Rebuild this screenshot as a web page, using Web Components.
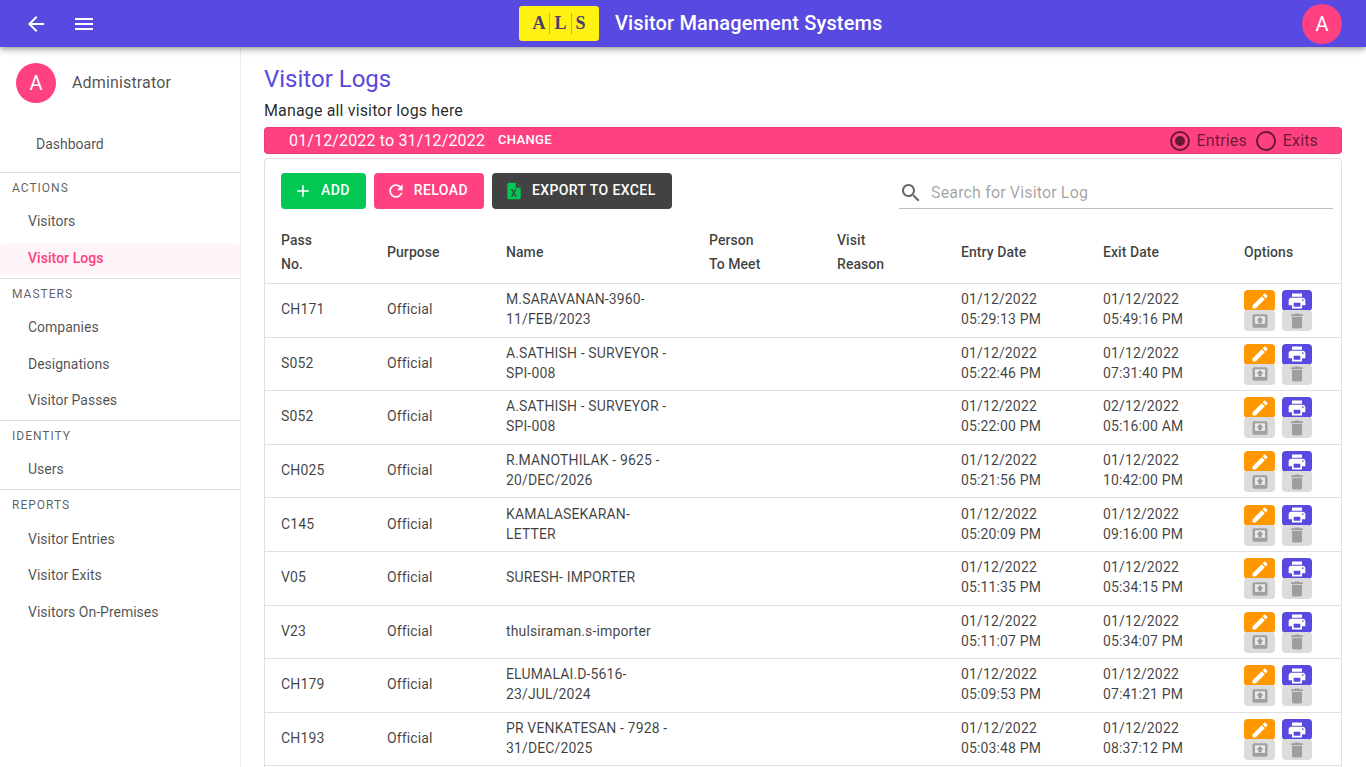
<!DOCTYPE html>
<html><head><meta charset="utf-8"><title>Visitor Logs</title>
<style>
html,body{margin:0;height:100%;overflow:hidden;background:#fff;font-family:Roboto,"Liberation Sans",sans-serif;color:rgba(0,0,0,.87)}
</style></head><body>
<vm-app></vm-app>
<script>
const P={
 back:'M20 11H7.83l5.59-5.59L12 4l-8 8 8 8 1.41-1.41L7.83 13H20v-2z',
 menu:'M3 18h18v-2H3v2zm0-5h18v-2H3v2zm0-7v2h18V6H3z',
 add:'M19 13h-6v6h-2v-6H5v-2h6V5h2v6h6v2z',
 refresh:'M17.65 6.35C16.2 4.9 14.21 4 12 4c-4.42 0-7.99 3.58-7.99 8s3.57 8 7.99 8c3.73 0 6.84-2.55 7.73-6h-2.08c-.82 2.33-3.04 4-5.65 4-3.31 0-6-2.69-6-6s2.69-6 6-6c1.66 0 3.14.69 4.22 1.78L13 11h7V4l-2.35 2.35z',
 search:'M15.5 14h-.79l-.28-.27C15.41 12.59 16 11.11 16 9.5 16 5.91 13.09 3 9.5 3S3 5.91 3 9.5 5.91 16 9.5 16c1.61 0 3.09-.59 4.23-1.57l.27.28v.79l5 4.99L20.49 19l-4.99-5zm-6 0C7.01 14 5 11.99 5 9.5S7.01 5 9.5 5 14 7.01 14 9.5 11.99 14 9.5 14z',
 edit:'M3 17.25V21h3.75L17.81 9.94l-3.75-3.75L3 17.25zM20.71 7.04c.39-.39.39-1.02 0-1.41l-2.34-2.34c-.39-.39-1.02-.39-1.41 0l-1.83 1.83 3.75 3.75 1.83-1.83z',
 print:'M19 8H5c-1.66 0-3 1.34-3 3v6h4v4h12v-4h4v-6c0-1.66-1.34-3-3-3zm-3 11H8v-5h8v5zm3-7c-.55 0-1-.45-1-1s.45-1 1-1 1 .45 1 1-.45 1-1 1zm-1-9H6v4h12V3z',
 del:'M6 19c0 1.1.9 2 2 2h8c1.1 0 2-.9 2-2V7H6v12zM19 4h-3.5l-1-1h-5l-1 1H5v2h14V4z',
 excel:'M14 2H6c-1.1 0-2 .9-2 2v16c0 1.1.9 2 2 2h12c1.1 0 2-.9 2-2V8l-6-6z'
};
const ico=(n,s=24,f='currentColor')=>`<svg width="${s}" height="${s}" viewBox="0 0 24 24" fill="${f}" style="display:block;flex:none"><path d="${P[n]}"/></svg>`;
const tray=`<svg width="18" height="18" viewBox="0 0 24 24" style="display:block;flex:none"><path fill="#a0a0a0" fill-rule="evenodd" d="M4 3h16c1 0 2 1 2 2v14c0 1-1 2-2 2H4c-1 0-2-1-2-2V5c0-1 1-2 2-2zm1.500 3v9.500h13V6z"/><path fill="#ececec" d="M5.500 6h13v9.500h-13z"/><path fill="#9c9c9c" d="M12 6.500l4.800 4.800h-2.600v3.700H9.800v-3.700H7.200z"/></svg>`;
class Base extends HTMLElement{
 constructor(){super();this.attachShadow({mode:'open'})}
 connectedCallback(){this.shadowRoot.innerHTML=this.render()}
}
const def=(n,r)=>customElements.define(n,class extends Base{render(){return r(this)}});

def('vm-avatar',e=>{const s=e.getAttribute('size')||40;return `<style>:host{display:flex;align-items:center;justify-content:center;flex:none;width:${s}px;height:${s}px;border-radius:50%;background:#ff4081;color:#fff;font-size:20px}</style>A`});

def('vm-topbar',()=>`<style>
:host{display:flex;align-items:center;height:47px;background:#5849e0;color:#fff;position:relative;z-index:2;flex:none;box-shadow:0 2px 4px -1px rgba(0,0,0,.2),0 4px 5px 0 rgba(0,0,0,.14),0 1px 10px 0 rgba(0,0,0,.12)}
.l{display:flex;gap:24px;padding-left:24px;width:519px;box-sizing:border-box}
.c{display:flex;align-items:center;flex:1}
.logo{width:80px;height:35px;background:#fff212;border-radius:3px;display:flex;align-items:center;justify-content:center;font:700 18px "Liberation Serif",serif;color:#4a4070}
.logo span{padding:0 4px;line-height:21px}
.logo span+span{border-left:1px solid #bdb33a}
h1{font-size:20px;font-weight:500;margin:-1px 0 0 16px;line-height:24px;letter-spacing:.15px}
.r{padding-right:24px}
</style>
<div class="l">${ico('back')}${ico('menu')}</div>
<div class="c"><div class="logo"><span>A</span><span>L</span><span>S</span></div><h1>Visitor Management Systems</h1></div>
<div class="r"><vm-avatar></vm-avatar></div>`);

def('vm-nav-item',e=>`<style>
:host{display:block;height:36.5px;padding-top:2.25px;box-sizing:border-box;font-size:14px;color:rgba(0,0,0,.7)}
.in{display:flex;align-items:center;height:32px;padding-left:28px;border-radius:4px}
:host([active]){color:#ff4081;font-weight:500;letter-spacing:.05px}
:host([active]) .in{background:rgba(255,64,129,.06)}
:host([home]) .in{padding-left:36px}
span{position:relative;top:-1px}
</style><div class="in"><span><slot></slot></span></div>`);

def('vm-nav-group',e=>`<style>
:host{display:block;border-top:1px solid #e0e0e0}
.t{height:31px;line-height:31px;padding-left:12px;font-size:12px;letter-spacing:1px;color:rgba(0,0,0,.65)}
.i{display:block;padding-bottom:.8px}
</style><div class="t">${e.getAttribute('title')}</div><div class="i"><slot></slot></div>`);

def('vm-sidebar',()=>`<style>
:host{display:block;width:240px;flex:none;border-right:1px solid #eee;overflow:hidden}
.u{display:flex;align-items:center;gap:16px;padding:16px 16px 0;height:40px;font-size:16px;letter-spacing:.15px;color:rgba(0,0,0,.7)}
.u span{position:relative;top:-1px}
.h{padding-top:24px;padding-bottom:8.5px}
</style>
<div class="u"><vm-avatar></vm-avatar><span>Administrator</span></div>
<div class="h"><vm-nav-item home>Dashboard</vm-nav-item></div>
<vm-nav-group title="ACTIONS"><vm-nav-item>Visitors</vm-nav-item><vm-nav-item active>Visitor Logs</vm-nav-item></vm-nav-group>
<vm-nav-group title="MASTERS"><vm-nav-item>Companies</vm-nav-item><vm-nav-item>Designations</vm-nav-item><vm-nav-item>Visitor Passes</vm-nav-item></vm-nav-group>
<vm-nav-group title="IDENTITY"><vm-nav-item>Users</vm-nav-item></vm-nav-group>
<vm-nav-group title="REPORTS"><vm-nav-item>Visitor Entries</vm-nav-item><vm-nav-item>Visitor Exits</vm-nav-item><vm-nav-item>Visitors On-Premises</vm-nav-item></vm-nav-group>`);

def('vm-btn',e=>`<style>
:host{display:flex;align-items:center;height:36px;border-radius:4px;color:#fff;font-size:14px;font-weight:500;letter-spacing:.4px;box-sizing:border-box;background:${e.getAttribute('bg')};padding:0 16px 0 12px;gap:8px}
span{position:relative;top:-1px}
</style>${e.getAttribute('icon')==='excel'?`<svg width="20" height="20" viewBox="0 0 24 24" style="display:block;flex:none"><path fill="#00c853" d="${P.excel}"/><path fill="#424242" d="M14 2v6h6z"/><text x="12" y="19.500" text-anchor="middle" font-size="12" font-family="Roboto" fill="#424242">X</text></svg>`:ico(e.getAttribute('icon'),20)}<span><slot></slot></span>`);

def('vm-radio',e=>`<style>
:host{display:flex;align-items:center;gap:7px;font-size:16px;letter-spacing:.15px;color:rgba(0,0,0,.6)}
.o{width:20px;height:20px;box-sizing:border-box;border:2px solid rgba(0,0,0,.6);border-radius:50%;display:flex;align-items:center;justify-content:center}
.o i{width:10px;height:10px;border-radius:50%;background:rgba(0,0,0,.6)}
</style><span class="o">${e.hasAttribute('checked')?'<i></i>':''}</span><slot></slot>`);

def('vm-datebar',()=>`<style>
:host{display:flex;align-items:center;height:27px;background:#ff4081;border-radius:4px;color:#fff;padding:0 24px 0 25px;box-shadow:inset 0 0 0 1px rgba(0,0,0,.08)}
.d{font-size:16px;letter-spacing:.15px}
.c{font-size:13px;font-weight:500;letter-spacing:.35px;margin-left:13px;flex:1;position:relative;top:-1px}
.r{display:flex;gap:9px}
</style><span class="d">01/12/2022 to 31/12/2022</span><span class="c">CHANGE</span><div class="r"><vm-radio checked>Entries</vm-radio><vm-radio>Exits</vm-radio></div>`);

def('vm-toolbar',()=>`<style>
:host{display:flex;align-items:flex-start;padding:14px 8px 0 16px;height:61px;box-sizing:border-box}
.b{display:flex;gap:8px}
.s{margin-left:auto;width:434px;height:31px;margin-top:4px;display:flex;align-items:center;gap:8px;border-bottom:1px solid #bdbdbd;color:rgba(0,0,0,.38);font-size:16px;letter-spacing:.15px}
.s svg{color:rgba(0,0,0,.6)}
</style>
<div class="b"><vm-btn bg="#00c853" icon="add">ADD</vm-btn><vm-btn bg="#ff4081" icon="refresh">RELOAD</vm-btn><vm-btn bg="#424242" icon="excel">EXPORT TO EXCEL</vm-btn></div>
<div class="s">${ico('search')}<span>Search for Visitor Log</span></div>`);

const COLS='106px 119px 203px 128px 124px 142px 141px 1fr';
def('vm-head',()=>`<style>
:host{display:grid;grid-template-columns:${COLS};align-items:center;height:64px;border-bottom:1px solid #e0e0e0;margin-top:-1px;font-size:14px;font-weight:500;line-height:24px;letter-spacing:.07px;color:rgba(0,0,0,.75)}
div{padding-left:16px;position:relative;top:1px}
</style><div>Pass<br>No.</div><div>Purpose</div><div>Name</div><div>Person<br>To Meet</div><div>Visit<br>Reason</div><div>Entry Date</div><div>Exit Date</div><div>Options</div>`);

def('vm-row',e=>{const a=n=>e.getAttribute(n);return `<style>
:host{display:grid;grid-template-columns:${COLS};align-items:center;height:53.6px;box-sizing:border-box;border-bottom:1px solid #e0e0e0;font-size:14px;line-height:20px;letter-spacing:.14px;color:rgba(0,0,0,.75);overflow:hidden}
div.c{padding-left:16px}
.t{position:relative;top:-1px}
.n{padding-right:20px}
.o{display:grid;grid-template-columns:31px 30px;grid-template-rows:20px 20px;column-gap:7px;width:68px}
.b{display:flex;align-items:center;justify-content:center;width:31px;height:21px;border-radius:4px;color:#fff}
.o .b:nth-child(2){width:30px}
.x{background:#dcdcdc;color:#9e9e9e;height:21px}
</style>
<div class="c t">${a('pass')}</div><div class="c t">Official</div><div class="c n t">${a('name')}</div><div class="c"></div><div class="c"></div>
<div class="c t">01/12/2022<br>${a('entry')}</div><div class="c t">${a('exit')}</div>
<div class="c"><div class="o"><span class="b" style="background:#ff9800">${ico('edit',20)}</span><span class="b" style="background:#5849e0">${ico('print',20)}</span><span class="b x">${tray}</span><span class="b x" style="width:30px">${ico('del',20)}</span></div></div>`});

const rows=[
['CH171','M.SARAVANAN-3960-11/FEB/2023','05:29:13 PM','01/12/2022<br>05:49:16 PM'],
['S052','A.SATHISH - SURVEYOR - SPI-008','05:22:46 PM','01/12/2022<br>07:31:40 PM'],
['S052','A.SATHISH - SURVEYOR - SPI-008','05:22:00 PM','02/12/2022<br>05:16:00 AM'],
['CH025','R.MANOTHILAK - 9625 - 20/DEC/2026','05:21:56 PM','01/12/2022<br>10:42:00 PM'],
['C145','KAMALASEKARAN-LETTER','05:20:09 PM','01/12/2022<br>09:16:00 PM'],
['V05','SURESH- IMPORTER','05:11:35 PM','01/12/2022<br>05:34:15 PM'],
['V23','thulsiraman.s-importer','05:11:07 PM','01/12/2022<br>05:34:07 PM'],
['CH179','ELUMALAI.D-5616-23/JUL/2024','05:09:53 PM','01/12/2022<br>07:41:21 PM'],
['CH193','PR VENKATESAN - 7928 - 31/DEC/2025','05:03:48 PM','01/12/2022<br>08:37:12 PM']];

def('vm-card',()=>`<style>
:host{display:block;border:1px solid #e0e0e0;border-bottom:0;border-radius:4px 4px 0 0;margin-top:4px;flex:1;min-height:0;overflow:hidden}
</style><vm-toolbar></vm-toolbar><vm-head></vm-head>${rows.map(r=>`<vm-row pass="${r[0]}" name="${r[1]}" entry="${r[2]}" exit="${r[3]}"></vm-row>`).join('')}`);

def('vm-app',()=>`<style>
:host{display:flex;flex-direction:column;height:767px;overflow:hidden}
.b{display:flex;flex:1;min-height:0}
main{flex:1;min-width:0;padding:16px 24px 0 23px;display:flex;flex-direction:column}
h2{margin:0;font-size:24px;font-weight:400;line-height:32px;color:#5849e0}
p{margin:0;font-size:16px;line-height:24px;letter-spacing:.15px;padding:4px 0;color:rgba(0,0,0,.85)}
</style>
<vm-topbar></vm-topbar>
<div class="b"><vm-sidebar></vm-sidebar><main><h2>Visitor Logs</h2><p>Manage all visitor logs here</p><vm-datebar></vm-datebar><vm-card></vm-card></main></div>`);
</script>
</body></html>
